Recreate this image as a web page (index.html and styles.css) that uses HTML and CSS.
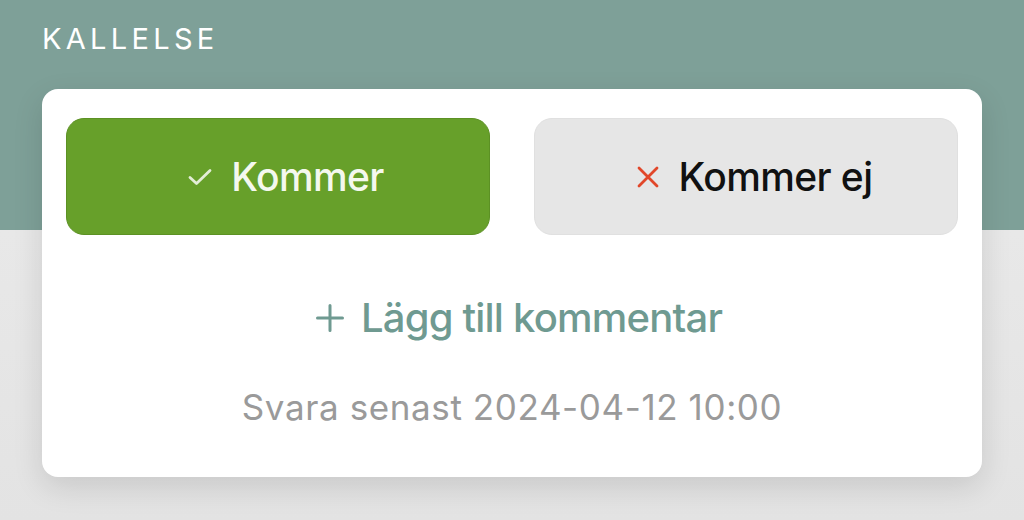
FILE: index.html
```html
<!DOCTYPE html>
<html lang="sv">
<head>
    <meta charset="UTF-8">
    <meta name="viewport" content="width=device-width, initial-scale=1.0">
    <title>Kallelse</title>
    <link rel="stylesheet" href="styles.css">
</head>
<body>
    <div class="header">
        <h1>Kallelse</h1>
    </div>
    <div class="card">
        <div class="answer-row">
            <button class="answer-btn yes">
                <svg class="icon" width="24" height="18" viewBox="0 0 24 18">
                    <path d="M2 9.5 L8.5 15.5 L22 2.5" fill="none" stroke="currentColor" stroke-width="2.8" stroke-linecap="round" stroke-linejoin="round"/>
                </svg>
                Kommer
            </button>
            <button class="answer-btn no">
                <svg class="icon" width="24" height="24" viewBox="0 0 24 24">
                    <path d="M3 3 L21 21 M21 3 L3 21" fill="none" stroke="#e1472a" stroke-width="2.8" stroke-linecap="round"/>
                </svg>
                Kommer ej
            </button>
        </div>
        <button class="comment-btn">
            <svg class="icon" width="28" height="28" viewBox="0 0 28 28">
                <path d="M14 1.5 V26.5 M1.5 14 H26.5" fill="none" stroke="currentColor" stroke-width="3" stroke-linecap="round"/>
            </svg>
            Lägg till kommentar
        </button>
        <p class="deadline">Svara senast 2024-04-12 10:00</p>
    </div>
</body>
</html>
```

FILE: styles.css
```css
body {
    font-family: Inter, "Noto Sans", sans-serif;
    margin: 0;
    padding: 0;
    background: linear-gradient(#ececec, #e3e3e3);
    min-height: 100vh;
}

.header {
    background-color: #7ea098;
    height: 230px;
    padding: 21px 42px 0;
    box-sizing: border-box;
}

    .header h1 {
        margin: 0;
        color: white;
        font-size: 29px;
        font-weight: 400;
        letter-spacing: 4.3px;
        text-transform: uppercase;
    }

.card {
    margin: -141px 42px 0;
    height: 388px;
    box-sizing: border-box;
    background-color: #ffffff;
    border-radius: 16px;
    box-shadow: 0 10px 30px rgba(0, 0, 0, 0.12);
    padding: 29px 24px 0;
    display: flex;
    flex-direction: column;
    align-items: center;
}

.answer-row {
    display: grid;
    grid-template-columns: 1fr 1fr;
    gap: 44px;
    width: 100%;
}

.answer-btn {
    height: 117px;
    border-radius: 18px;
    padding: 0 0 0 16px;
    font-family: inherit;
    font-size: 39px;
    font-weight: 500;
    letter-spacing: -0.6px;
    display: flex;
    align-items: center;
    justify-content: center;
    gap: 19px;
    cursor: pointer;
}

    .answer-btn.yes {
        background-color: #67a02a;
        border: 1px solid #5c9124;
        color: #f4f8ee;
    }

        .answer-btn.yes .icon {
            color: #e3edd6;
        }

    .answer-btn.no {
        background-color: #e6e6e6;
        border: 1px solid #e0e0e0;
        color: #111;
    }

.comment-btn {
    margin: 58px 0 0 14px;
    padding: 0;
    background: none;
    border: none;
    font-family: inherit;
    font-size: 40px;
    font-weight: 450;
    letter-spacing: -0.8px;
    color: #6f9a91;
    display: flex;
    align-items: center;
    gap: 17px;
    cursor: pointer;
}

.deadline {
    margin: 44px 0 0;
    font-size: 35px;
    font-weight: 400;
    letter-spacing: 0.6px;
    color: #9a9a9a;
}
```
